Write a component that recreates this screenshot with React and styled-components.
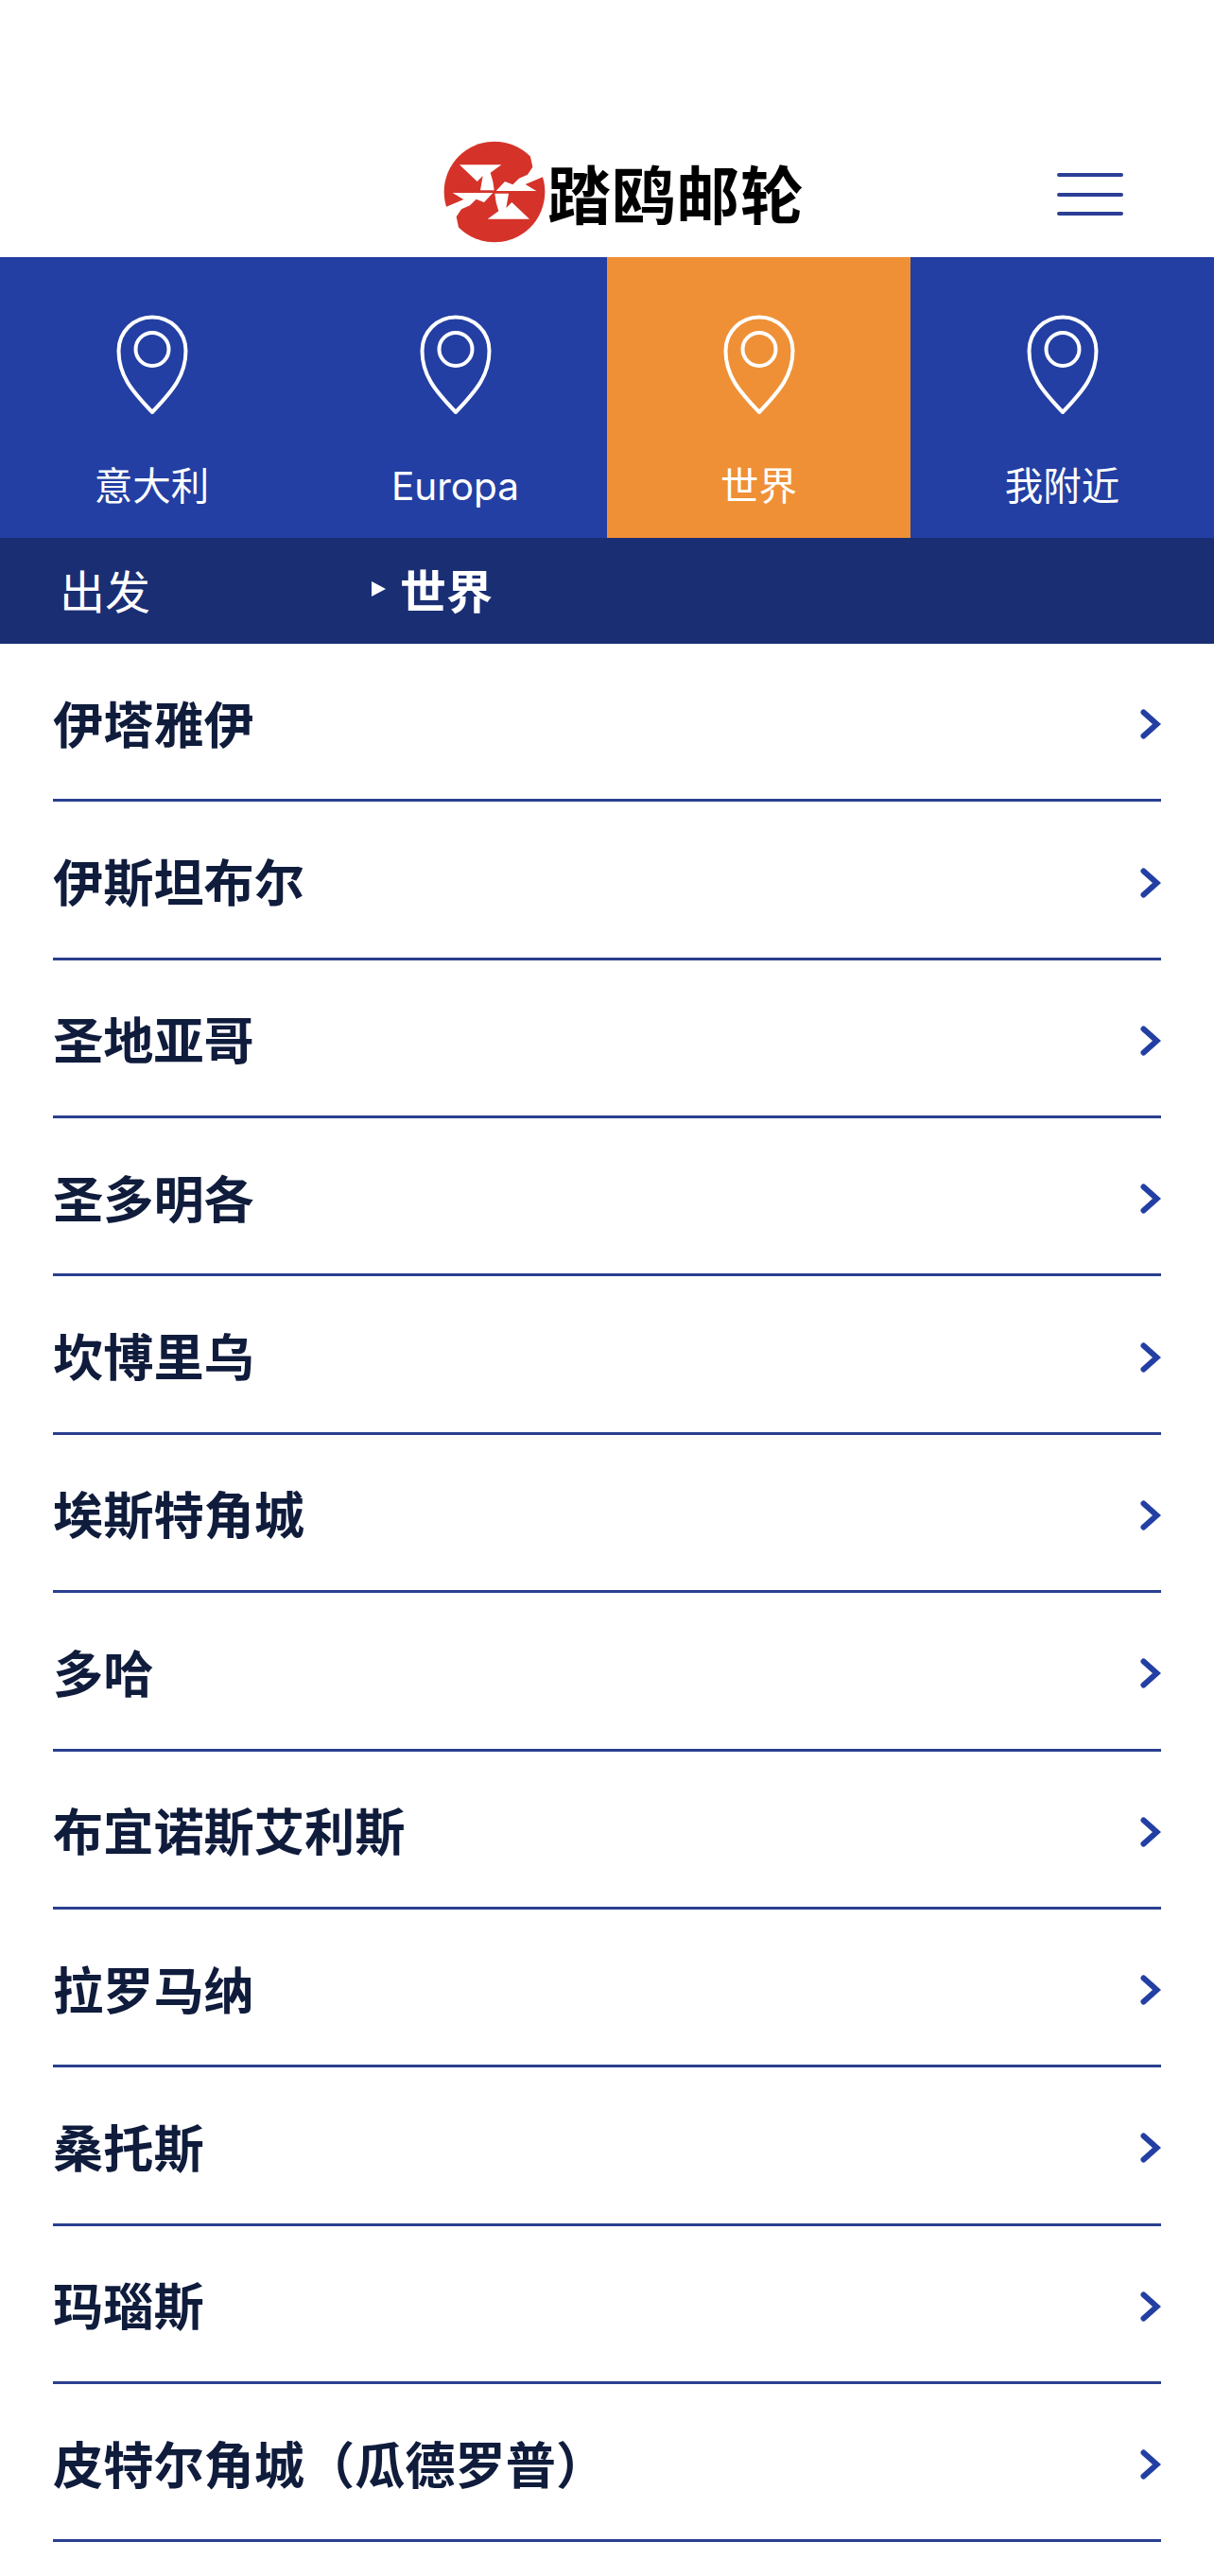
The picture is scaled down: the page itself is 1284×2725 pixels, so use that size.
import React from "react";
import styled, { createGlobalStyle } from "styled-components";

const GlobalStyle = createGlobalStyle`
  html, body {
    margin: 0;
    padding: 0;
    background: #fff;
  }
  body {
    font-family: "Inter", "Noto Sans CJK SC", sans-serif;
  }
`;

const TABS = [
  { label: "意大利" },
  { label: "Europa" },
  { label: "世界", active: true },
  { label: "我附近" },
];

const PORTS = [
  "伊塔雅伊",
  "伊斯坦布尔",
  "圣地亚哥",
  "圣多明各",
  "坎博里乌",
  "埃斯特角城",
  "多哈",
  "布宜诺斯艾利斯",
  "拉罗马纳",
  "桑托斯",
  "玛瑙斯",
  "皮特尔角城（瓜德罗普）",
];

const LogoMark = () => (
  <svg width="110" height="110" viewBox="18 18 330 330">
    <circle cx="183" cy="183" r="160" fill="#d5332a" />
    <path
      fill="#fff"
      d="M72 97H205L170 122 178 150 182 178H138L146 132 128 150Z"
    />
    <path
      fill="#fff"
      d="M50 186H178L150 216 125 206 105 226 78 238 62 262 70 300 0 260 30 230 85 207Z"
    />
    <path
      fill="#fff"
      d="M316 180H188L216 150 241 160 261 140 288 128 304 104 296 66 366 106 336 136 281 159Z"
    />
    <path
      fill="#fff"
      d="M294 269H161L196 244 188 216 184 188H228L220 234 238 216Z"
    />
  </svg>
);

const Pin = () => (
  <svg width="76" height="106" viewBox="0 0 76 106">
    <path
      fill="none"
      stroke="#fff"
      strokeWidth="4"
      strokeLinejoin="round"
      d="M38 2.500C18.500 2.500 2.500 18 2.500 38 2.500 64 16 80 38 103 60 80 73.500 64 73.500 38 73.500 18 57.500 2.500 38 2.500z"
    />
    <circle cx="38" cy="36.500" r="17.500" fill="none" stroke="#fff" strokeWidth="4" />
  </svg>
);

const Chevron = () => (
  <svg width="22" height="32" viewBox="0 0 22 32">
    <path
      fill="none"
      stroke="#233fa3"
      strokeWidth="6"
      strokeLinecap="round"
      d="M3.500 3.500l14 12.500-14 12.500"
    />
  </svg>
);

const Header = styled.header`
  height: 272px;
  box-sizing: border-box;
  padding: 0 96px 0 468px;
  display: flex;
  align-items: flex-start;
  justify-content: space-between;
`;

const Logo = styled.a`
  margin-top: 148px;
  display: flex;
  align-items: center;
  color: #000;
  font-family: "Noto Sans CJK SC", sans-serif;
  font-size: 67px;
  font-weight: 700;
  line-height: 110px;
  white-space: nowrap;
`;

const LogoText = styled.span`
  margin-left: 1px;
  letter-spacing: 1px;
`;

const Burger = styled.button`
  margin-top: 183px;
  width: 70px;
  padding: 0;
  border: 0;
  background: none;
  display: flex;
  flex-direction: column;
  gap: 16.500px;
`;

const BurgerLine = styled.span`
  display: block;
  height: 4px;
  border-radius: 2px;
  background: #2a3f95;
`;

const Tabs = styled.nav`
  display: grid;
  grid-template-columns: repeat(4, 1fr);
  height: 297px;
  background: #233fa3;
`;

const Tab = styled.a`
  display: flex;
  flex-direction: column;
  align-items: center;
  padding-top: 61px;
  box-sizing: border-box;
  color: #fff;
  background: ${(p) => (p.$active ? "#ef9036" : "transparent")};
`;

const TabLabel = styled.span`
  margin-top: 48px;
  font-size: 40.500px;
  line-height: 56px;
  font-weight: 400;
`;

const Breadcrumb = styled.div`
  height: 112px;
  background: #1a2e74;
  color: #fff;
  display: flex;
  align-items: center;
  padding: 0 0 5px 63px;
  box-sizing: border-box;
`;

const Crumb = styled.span`
  width: 330px;
  font-size: 48px;
  font-weight: 400;
`;

const Current = styled.span`
  display: flex;
  align-items: center;
  font-size: 49px;
  font-weight: 700;
`;

const Arrow = styled.i`
  width: 0;
  height: 0;
  margin-right: 15px;
  border-left: 15px solid #fff;
  border-top: 8px solid transparent;
  border-bottom: 8px solid transparent;
`;

const List = styled.ul`
  list-style: none;
  margin: 0;
  padding: 0 56px;
`;

const Row = styled.li`
  height: 167.360px;
  box-sizing: border-box;
  border-bottom: 3px solid #2a3f8f;
  display: flex;
  align-items: center;
  justify-content: space-between;
  color: #101c3c;
  font-size: 53.200px;
  font-weight: 700;
`;

const RowIcon = styled.span`
  display: flex;
  padding-top: 6px;
`;

export default function App() {
  return (
    <>
      <GlobalStyle />
      <Header>
        <Logo>
          <LogoMark />
          <LogoText>踏鸥邮轮</LogoText>
        </Logo>
        <Burger aria-label="菜单">
          <BurgerLine />
          <BurgerLine />
          <BurgerLine />
        </Burger>
      </Header>
      <Tabs>
        {TABS.map((tab) => (
          <Tab key={tab.label} $active={tab.active}>
            <Pin />
            <TabLabel>{tab.label}</TabLabel>
          </Tab>
        ))}
      </Tabs>
      <Breadcrumb>
        <Crumb>出发</Crumb>
        <Current>
          <Arrow />
          世界
        </Current>
      </Breadcrumb>
      <List>
        {PORTS.map((port) => (
          <Row key={port}>
            {port}
            <RowIcon>
              <Chevron />
            </RowIcon>
          </Row>
        ))}
      </List>
    </>
  );
}
